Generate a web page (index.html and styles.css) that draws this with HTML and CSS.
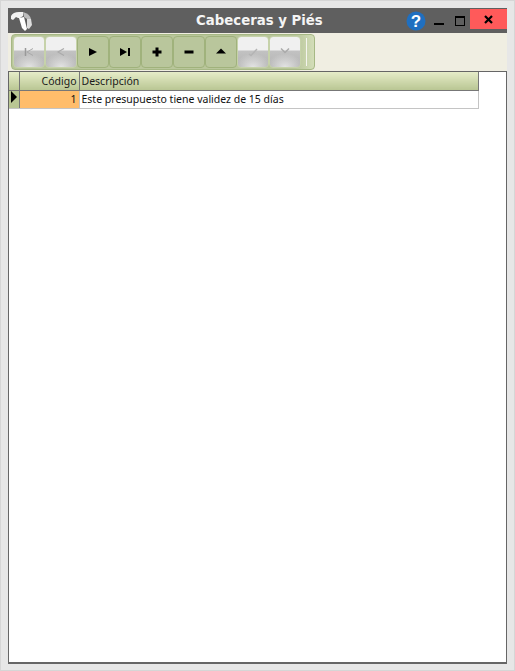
FILE: index.html
```html
<!DOCTYPE html>
<html lang="es">
<head>
  <meta charset="UTF-8">
  <title>Cabeceras y Piés</title>
  <link rel="stylesheet" href="styles.css">
</head>
<body>
  <div class="window">
    <div class="titlebar">
      <svg class="logo" width="24" height="22" viewBox="0 0 24 22">
        <path d="M1 6 Q3 2 9 2 L13 2 L13 6 L10 8 L8 8 L6 7 L3 10 L1 9 Z" fill="#f0f0f0"/>
        <path d="M9 8 L14 7 L17 19 L15 21 L12 18 Z" fill="#fff"/>
        <path d="M13 2 Q20 4 21 9 L17 9 L14 7 Z" fill="#bbb"/>
        <path d="M17 9 L21 9 L22 15 L19 19 L17 18 Z" fill="#ddd"/>
      </svg>
      <span class="title">Cabeceras y Piés</span>
      <svg class="help" width="20" height="20" viewBox="0 0 20 20">
        <circle cx="10" cy="10" r="9.5" fill="#1f6fc0"/>
        <text x="10" y="16" text-anchor="middle" class="help-mark">?</text>
      </svg>
      <span class="win-btn"><span class="min-glyph"></span></span>
      <span class="win-btn"><span class="max-glyph"></span></span>
      <span class="close-btn">
        <svg width="9" height="9" viewBox="0 0 9 9"><path d="M1 1 L8 8 M8 1 L1 8" stroke="#000" stroke-width="2.2"/></svg>
      </span>
    </div>

    <div class="toolbar">
      <div class="navigator">
        <button class="nav-btn off"><svg width="14" height="10" viewBox="0 0 14 10"><path d="M3.500 1V9" stroke="#999" stroke-width="1.500"/><path d="M11 1.500L5 5L11 8.500" stroke="#aaa" fill="none"/></svg></button>
        <button class="nav-btn off"><svg width="14" height="10" viewBox="0 0 14 10"><path d="M10 1.500L4 5L10 8.500" stroke="#aaa" stroke-width="1.200" fill="none"/></svg></button>
        <button class="nav-btn"><svg width="14" height="10" viewBox="0 0 14 10"><path d="M3 1L11 5L3 9Z"/></svg></button>
        <button class="nav-btn"><svg width="14" height="10" viewBox="0 0 14 10"><path d="M2 1L9 5L2 9Z"/><rect x="10" y="1" width="2" height="8"/></svg></button>
        <button class="nav-btn"><svg width="14" height="10" viewBox="0 0 14 10"><path d="M5.500 0.500H8.500V3.500H11.500V6.500H8.500V9.500H5.500V6.500H2.500V3.500H5.500Z"/></svg></button>
        <button class="nav-btn"><svg width="14" height="10" viewBox="0 0 14 10"><rect x="2.500" y="3.500" width="9" height="3"/></svg></button>
        <button class="nav-btn"><svg width="14" height="10" viewBox="0 0 14 10"><path d="M7 1.500L12 6.500H2Z"/></svg></button>
        <button class="nav-btn off"><svg width="14" height="10" viewBox="0 0 14 10"><path d="M3 7L5 8.500L11 2" stroke="#b4b4b4" stroke-width="1.500" fill="none"/></svg></button>
        <button class="nav-btn off"><svg width="14" height="10" viewBox="0 0 14 10"><path d="M3 1.500L7 5.500L11 1.500" stroke="#aaa" stroke-width="1.500" fill="none"/></svg></button>
        <span class="nav-sep"></span>
      </div>
    </div>

    <div class="content">
      <table class="grid">
        <thead>
          <tr>
            <th class="col-ind"></th>
            <th class="col-code">Código</th>
            <th class="col-desc">Descripción</th>
          </tr>
        </thead>
        <tbody>
          <tr>
            <td class="col-ind"><span class="row-arrow"></span></td>
            <td class="col-code selected">1</td>
            <td class="col-desc">Este presupuesto tiene validez de 15 días</td>
          </tr>
        </tbody>
      </table>
    </div>
  </div>
</body>
</html>
```

FILE: styles.css
```css
html, body {
  margin: 0;
  height: 100%;
}
body {
  font-family: "Noto Sans", sans-serif;
  font-size: 10.5px;
}
.window {
  box-sizing: border-box;
  height: 671px;
  padding: 7px 7px 6px 7px;
  background-color: #e7e7e7;
  border: 1px solid #d6d6d6;
  display: flex;
  flex-direction: column;
}
.titlebar {
  height: 25px;
  background-color: #5f5f5f;
  display: flex;
  align-items: center;
  position: relative;
  flex: none;
}
.logo {
  margin-left: 2px;
}
.title {
  position: absolute;
  left: 188px;
  top: 5px;
  font-family: "DejaVu Sans", sans-serif;
  font-weight: bold;
  font-size: 13.3px;
  color: #f4f4f4;
}
.help {
  margin-left: auto;
  margin-right: 2px;
}
.help-mark {
  font-family: "Liberation Sans", sans-serif;
  font-weight: bold;
  font-size: 17px;
  fill: #fff;
}
.win-btn {
  width: 21px;
  height: 20px;
  display: flex;
  align-items: center;
  justify-content: center;
}
.min-glyph {
  width: 10px;
  height: 2px;
  background-color: #000;
  margin-top: 7px;
}
.max-glyph {
  box-sizing: border-box;
  width: 10px;
  height: 10px;
  border: 1px solid #000;
  border-top-width: 2px;
}
.close-btn {
  width: 37px;
  height: 20px;
  margin-bottom: 3px;
  background-color: #ff5a5a;
  display: flex;
  align-items: center;
  justify-content: center;
}
.toolbar {
  height: 38px;
  background-color: #f0eee2;
  flex: none;
  padding: 1px 0 0 3px;
  box-sizing: border-box;
}
.navigator {
  box-sizing: border-box;
  width: 304px;
  height: 36px;
  background: linear-gradient(90deg, #b9c69b 0, #b9c69b 94%, #d3ddb8 100%);
  border: 1px solid #a6b884;
  border-radius: 4px;
  display: flex;
  align-items: center;
  padding-left: 1px;
}
.nav-btn {
  box-sizing: border-box;
  width: 32px;
  height: 32px;
  padding: 0;
  border: 1px solid #a0b27c;
  border-radius: 4px;
  background-color: #b9c69c;
  display: flex;
  align-items: center;
  justify-content: center;
}
.nav-btn.off {
  border-color: #c6d2aa;
  background:
    radial-gradient(ellipse 60% 45% at 50% 100%, #e4e4e4 0, rgba(228, 228, 228, 0) 100%),
    linear-gradient(#f0f0f0 0, #f0f0f0 44%, #c2c2c2 46%, #b4b4b4 100%);
}
.nav-sep {
  width: 1px;
  height: 28px;
  margin-left: 5px;
  background-color: #f4f4ee;
}
.content {
  flex: 1;
  background-color: #fff;
  border: 1px solid #666;
  border-width: 1px 1px 2px 1px;
}
.grid {
  border-collapse: collapse;
  table-layout: fixed;
  width: 470px;
}
.grid th {
  height: 18px;
  padding: 1px 2px 0;
  font-weight: normal;
  color: #1a1a1a;
  background: linear-gradient(#e6ecc8, #b9c693);
  border-right: 1px solid #777;
  border-bottom: 1px solid #777;
}
.grid td {
  height: 18px;
  padding: 0 2px;
  border-right: 1px solid #c4c4c4;
  border-bottom: 1px solid #c4c4c4;
  color: #111;
}
.grid th, .grid td {
  box-sizing: border-box;
  overflow: hidden;
  white-space: nowrap;
}
.grid .col-ind {
  width: 10px;
  padding: 0;
  text-align: left;
  background: #b9c693;
  border-right-color: #777;
}
.grid thead .col-ind {
  background: linear-gradient(#e6ecc8, #b9c693);
}
.grid .col-code {
  width: 60px;
  text-align: right;
}
.grid .col-desc {
  text-align: left;
}
.grid .selected {
  background-color: #ffbd6b;
}
.row-arrow {
  display: block;
  width: 0;
  height: 0;
  margin: 0 0 4px 2px;
  border-style: solid;
  border-width: 6px 0 6px 6px;
  border-color: transparent transparent transparent #000;
}
```
